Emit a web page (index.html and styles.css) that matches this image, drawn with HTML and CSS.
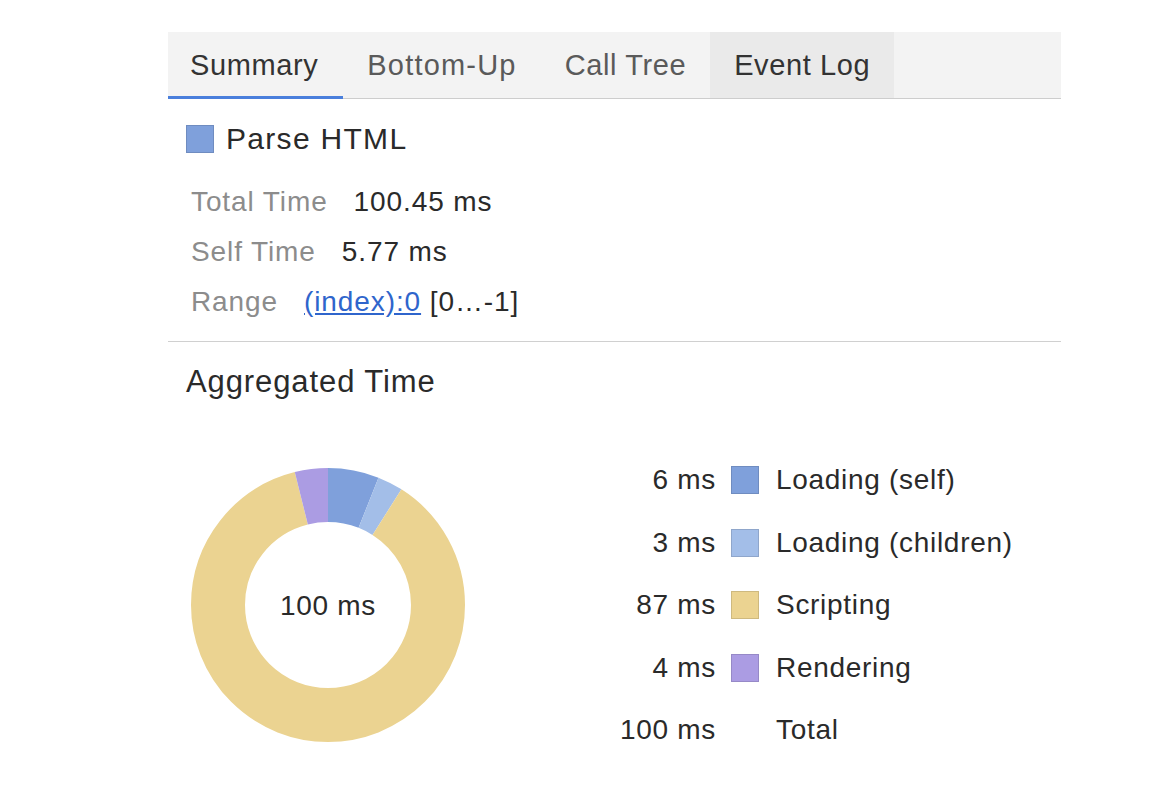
FILE: index.html
```html
<!DOCTYPE html>
<html>
<head>
<meta charset="utf-8">
<link rel="stylesheet" href="styles.css">
</head>
<body>
<div class="panel">
  <div class="tabs">
    <div class="tab active">Summary</div>
    <div class="tab wide">Bottom-Up</div>
    <div class="tab">Call Tree</div>
    <div class="tab hover">Event Log</div>
  </div>
  <div class="summary">
    <div class="title">
      <span class="swatch loading-self"></span>
      <span class="title-text">Parse HTML</span>
    </div>
    <div class="details">
      <div class="row"><span class="label">Total Time</span><span class="value">100.45 ms</span></div>
      <div class="row"><span class="label">Self Time</span><span class="value">5.77 ms</span></div>
      <div class="row"><span class="label">Range</span><span class="value"><a class="link" href="#">(index):0</a> [0…-1]</span></div>
    </div>
  </div>
  <div class="aggregated">
    <div class="agg-title">Aggregated Time</div>
    <div class="chart">
      <svg class="donut" width="280" height="280" viewBox="0 0 280 280">
        <g transform="rotate(-90 140 140)" fill="none" stroke-width="54">
          <circle cx="140" cy="140" r="110" stroke="#7fa0db" stroke-dasharray="41.47 691.15" stroke-dashoffset="0"/>
          <circle cx="140" cy="140" r="110" stroke="#a3bee8" stroke-dasharray="20.73 691.15" stroke-dashoffset="-41.47"/>
          <circle cx="140" cy="140" r="110" stroke="#ebd391" stroke-dasharray="601.30 691.15" stroke-dashoffset="-62.20"/>
          <circle cx="140" cy="140" r="110" stroke="#ab9ce3" stroke-dasharray="27.65 691.15" stroke-dashoffset="-663.50"/>
        </g>
        <text x="140" y="150" text-anchor="middle" class="donut-text">100 ms</text>
      </svg>
      <div class="legend">
        <span class="lv">6 ms</span><span class="swatch sm loading-self"></span><span class="ll">Loading (self)</span>
        <span class="lv">3 ms</span><span class="swatch sm loading-children"></span><span class="ll">Loading (children)</span>
        <span class="lv">87 ms</span><span class="swatch sm scripting"></span><span class="ll">Scripting</span>
        <span class="lv">4 ms</span><span class="swatch sm rendering"></span><span class="ll">Rendering</span>
        <span class="lv">100 ms</span><span class="empty"></span><span class="ll">Total</span>
      </div>
    </div>
  </div>
</div>
</body>
</html>
```
FILE: styles.css
```css
html, body {
  margin: 0;
  padding: 0;
  background: #ffffff;
}
body {
  font-family: "Liberation Sans", Arial, Helvetica, sans-serif;
  color: #303030;
}
.panel {
  margin: 32px 0 0 168px;
  width: 893px;
}
.tabs {
  display: flex;
  height: 66px;
  background: #f3f3f3;
  border-bottom: 1px solid #cdcdcd;
}
.tab {
  position: relative;
  padding: 0 24px;
  line-height: 66px;
  font-size: 29px;
  letter-spacing: 0.6px;
  color: #5a5a5a;
}
.tab.active {
  padding: 0 25px 0 22px;
  color: #333333;
}
.tab.wide {
  letter-spacing: 1.2px;
}
.tab.active::after {
  content: "";
  position: absolute;
  left: 0;
  right: 0;
  bottom: -1px;
  height: 3px;
  background: #4a7fdc;
}
.tab.hover {
  background: #eaeaea;
  color: #333333;
}
.summary {
  padding-left: 18px;
  padding-bottom: 14px;
  border-bottom: 1px solid #d0d0d0;
}
.title {
  display: flex;
  align-items: center;
  gap: 12px;
  margin-top: 22px;
  height: 36px;
}
.swatch {
  display: inline-block;
  width: 26px;
  height: 26px;
  border: 1px solid rgba(0, 0, 0, 0.12);
}
.title-text {
  font-size: 30px;
  letter-spacing: 1.3px;
  color: #2a2a2a;
}
.loading-self { background: #7fa0db; }
.loading-children { background: #a3bee8; }
.scripting { background: #ebd391; }
.rendering { background: #ab9ce3; }
.details {
  margin-top: 20px;
  padding-left: 5px;
}
.row {
  display: flex;
  height: 50px;
  line-height: 50px;
  font-size: 28px;
  letter-spacing: 0.9px;
}
.label {
  color: #8c8c8c;
  margin-right: 26px;
}
.value {
  color: #2a2a2a;
}
.link {
  color: #2f65cc;
  text-decoration: underline;
}
.aggregated {
  padding-left: 18px;
}
.agg-title {
  margin-top: 20px;
  height: 40px;
  line-height: 40px;
  font-size: 31px;
  letter-spacing: 0.9px;
  color: #2a2a2a;
}
.chart {
  display: flex;
  align-items: center;
  margin-top: 47px;
  padding-left: 2px;
}
.donut {
  display: block;
  flex: none;
}
.donut-text {
  font-family: "Liberation Sans", Arial, sans-serif;
  font-size: 28px;
  letter-spacing: 0.7px;
  fill: #2a2a2a;
}
.legend {
  margin-left: 148px;
  display: grid;
  grid-template-columns: 100px 43px auto;
  grid-auto-rows: 62.5px;
  align-items: center;
  font-size: 28px;
  letter-spacing: 0.7px;
  color: #2a2a2a;
}
.lv {
  text-align: right;
}
.swatch.sm {
  width: 26px;
  height: 26px;
  margin-left: 15px;
}
.ll {
  margin-left: 17px;
}
```
